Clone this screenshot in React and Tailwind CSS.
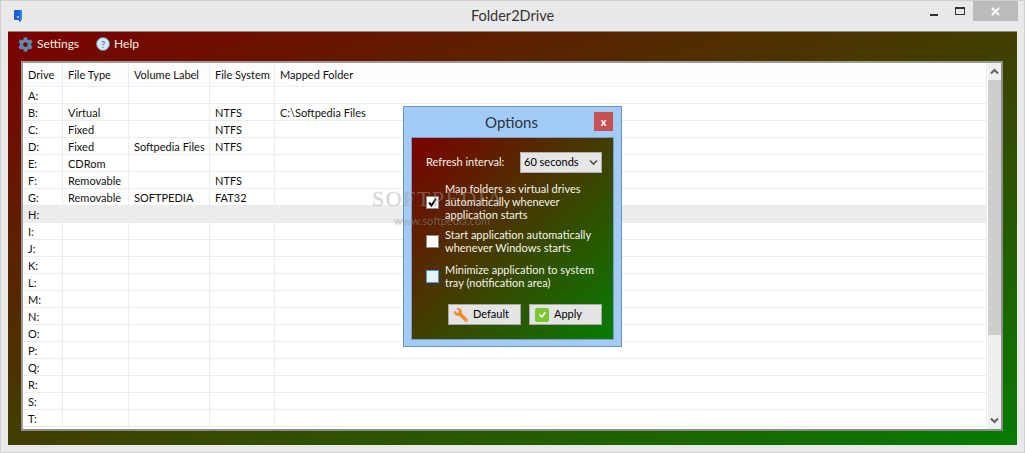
import React from 'react'
import { FaCog, FaWrench } from 'react-icons/fa'

const drives = [
  ['A:', '', '', '', ''],
  ['B:', 'Virtual', '', 'NTFS', 'C:\\Softpedia Files'],
  ['C:', 'Fixed', '', 'NTFS', ''],
  ['D:', 'Fixed', 'Softpedia Files', 'NTFS', ''],
  ['E:', 'CDRom', '', '', ''],
  ['F:', 'Removable', '', 'NTFS', ''],
  ['G:', 'Removable', 'SOFTPEDIA', 'FAT32', ''],
  ['H:', '', '', '', ''],
  ['I:', '', '', '', ''],
  ['J:', '', '', '', ''],
  ['K:', '', '', '', ''],
  ['L:', '', '', '', ''],
  ['M:', '', '', '', ''],
  ['N:', '', '', '', ''],
  ['O:', '', '', '', ''],
  ['P:', '', '', '', ''],
  ['Q:', '', '', '', ''],
  ['R:', '', '', '', ''],
  ['S:', '', '', '', ''],
  ['T:', '', '', '', ''],
]

const headers = ['Drive', 'File Type', 'Volume Label', 'File System', 'Mapped Folder']
const colWidths = ['w-[40px]', 'w-[66px]', 'w-[81px]', 'w-[65px]', 'flex-1']

const ScrollArrow = ({ up }) => (
  <svg width="9" height="7" viewBox="0 0 9 7" className="shrink-0">
    <path d={up ? 'M1 5.5 L4.5 2 L8 5.5' : 'M1 1.5 L4.5 5 L8 1.5'} fill="none" stroke="#606060" strokeWidth="2" />
  </svg>
)

const Check = ({ checked, hover, label, className, labelClass = '' }) => (
  <div className={`flex items-center gap-[6px] pl-[14px] ${className}`}>
    <div
      className={`w-[13px] h-[13px] shrink-0 border flex items-center justify-center ${
        hover ? 'bg-[#e8f3ff] border-[#3e9bf0]' : 'bg-white border-[#8a8a8a]'
      }`}
    >
      {checked && (
        <svg width="11" height="11" viewBox="0 0 11 11">
          <path d="M2 5.5 L4.5 8.5 L9 1.5" fill="none" stroke="#111" strokeWidth="2" />
        </svg>
      )}
    </div>
    <div className={`text-[#f4f4ec] text-[11px] leading-[13px] w-[162px] ${labelClass}`}>{label}</div>
  </div>
)

const OptionButton = ({ icon, label }) => (
  <div className="w-[73px] h-[21px] bg-[#e4e4e4] border border-[#a8a8a8] flex items-center gap-[5px] pl-[5px] text-[11px] text-black">
    {icon}
    <span>{label}</span>
  </div>
)

export default function App() {
  return (
    <div
      className="relative w-[1025px] h-[453px] overflow-hidden bg-[#e9e9e9] border border-[#d0d0d0] flex flex-col"
      style={{ fontFamily: 'Lato, Roboto, sans-serif' }}
    >
      {/* title bar */}
      <div className="relative h-[30px] shrink-0 flex items-center justify-center">
        <svg width="9" height="12" viewBox="0 0 9 12" className="absolute left-[13px] top-[9px]">
          <rect x="0" y="0" width="8" height="10" rx="1" fill="#1c5fd0" />
          <rect x="6" y="0" width="2" height="10" fill="#2f86ee" />
          <rect x="3" y="6" width="2" height="2" fill="#9cc4f5" />
          <rect x="5" y="10" width="2" height="1.5" fill="#1c5fd0" />
        </svg>
        <div className="text-[14.5px] text-[#333] pb-[1px]">Folder2Drive</div>
        <div className="absolute right-[6px] top-0 flex items-start">
          <div className="w-[27px] h-[20px] flex items-end justify-center pb-[5px]">
            <div className="w-[8px] h-[2px] bg-[#333]" />
          </div>
          <div className="w-[26px] h-[20px] flex items-start justify-center pt-[6px]">
            <div className="w-[10px] h-[8px] border border-t-2 border-[#333]" />
          </div>
          <div className="w-[45px] h-[20px] bg-[#bcbcbc] flex items-center justify-center">
            <svg width="9" height="9" viewBox="0 0 9 9">
              <path d="M1 1 L8 8 M8 1 L1 8" stroke="#fff" strokeWidth="2" />
            </svg>
          </div>
        </div>
      </div>

      {/* gradient panel */}
      <div className="mx-[7px] w-[1009px] h-[414px] flex flex-col bg-linear-to-br/srgb from-[#7c0000] to-[#067c00] border-t border-[#8a8a7a]">
        <div className="h-[29px] shrink-0 flex items-center pl-[10px] pb-[5px] text-[12px] text-[#f4f0e4]">
          <FaCog className="w-[15px] h-[15px] text-[#5f88ad] mr-[4px]" />
          <span>Settings</span>
          <div className="ml-[17px] mr-[4px] w-[14px] h-[14px] rounded-full bg-[#d8e8f6] border border-[#5f88ad] flex items-center justify-center text-[10px] font-bold text-[#5f88ad]">
            ?
          </div>
          <span>Help</span>
        </div>

        <div className="mx-[13px] w-[982px] h-[370px] bg-white border-2 border-[#8c8c8c] border-t-[#9a9a9a] border-l-[#9a9a9a] flex">
          <div className="w-[964px] shrink-0 overflow-hidden">
            <div className="flex h-[24px] border-b border-[#e4edf8] text-[11px] text-[#111]">
              {headers.map((h, i) => (
                <div
                  key={h}
                  className={`${colWidths[i]} flex items-center pl-[5px] pt-[1px] border-r border-[#e4edf8] bg-[#fdfdfd] whitespace-nowrap`}
                >
                  {h}
                </div>
              ))}
            </div>
            {drives.map((row) => (
              <div
                key={row[0]}
                className={`flex h-[17px] border-b border-[#ececec] text-[11px] leading-[16px] text-[#111] ${
                  row[0] === 'H:' ? 'bg-[#ececec]' : ''
                }`}
              >
                {row.map((cell, i) => (
                  <div key={i} className={`${colWidths[i]} pl-[5px] pt-[1px] border-r border-[#ececec] whitespace-nowrap`}>
                    {cell}
                  </div>
                ))}
              </div>
            ))}
          </div>
          <div className="w-[15px] ml-[1px] bg-[#efefef] flex flex-col items-center">
            <div className="h-[17px] flex items-center justify-center">
              <ScrollArrow up />
            </div>
            <div className="w-full h-[255px] bg-[#cdcdcd]" />
            <div className="flex-1" />
            <div className="h-[17px] flex items-center justify-center">
              <ScrollArrow />
            </div>
          </div>
        </div>
      </div>

      {/* options dialog */}
      <div className="absolute left-[402px] top-[105px] w-[219px] h-[241px] bg-[#a3cbf7] border border-[#6f93b8] flex flex-col">
        <div className="relative h-[30px] shrink-0 flex items-center justify-center text-[15px] text-[#2a3440]">
          <span className="pr-[2px]">Options</span>
          <div className="absolute right-[8px] top-[5px] w-[19px] h-[19px] bg-[#c75050] flex items-center justify-center text-white text-[11px] font-bold leading-none">
            x
          </div>
        </div>
        <div className="mx-[7px] w-[203px] h-[203px] border border-[#7d9cc0] bg-linear-to-br/srgb from-[#7c0000] to-[#067c00] flex flex-col">
          <div className="flex items-center pl-[14px] pt-[14px] text-[11px] text-[#f4f4ec]">
            <span className="w-[94px]">Refresh interval:</span>
            <div className="w-[82px] h-[21px] bg-[#e6e6e6] border border-[#b0b0b0] flex items-center justify-between px-[3px] text-[11px] text-black">
              60 seconds
              <svg width="9" height="7" viewBox="0 0 9 7">
                <path d="M1 1.5 L4.5 5 L8 1.5" fill="none" stroke="#505050" strokeWidth="1.6" />
              </svg>
            </div>
          </div>
          <Check className="mt-[9px]" labelClass="pb-[2px]" checked label="Map folders as virtual drives automatically whenever application starts" />
          <Check className="mt-[5px]" label="Start application automatically whenever Windows starts" />
          <Check className="mt-[9px]" hover label="Minimize application to system tray (notification area)" />
          <div className="flex gap-[8px] pl-[36px] mt-[15px]">
            <OptionButton icon={<FaWrench className="w-[14px] h-[14px] text-[#ee8a2c] -scale-x-100" />} label="Default" />
            <OptionButton
              icon={
                <div className="w-[14px] h-[14px] rounded-[2px] bg-[#79c832] flex items-center justify-center">
                  <svg width="9" height="9" viewBox="0 0 9 9">
                    <path d="M1.5 4.5 L3.8 7 L7.5 2" fill="none" stroke="#fff" strokeWidth="1.6" />
                  </svg>
                </div>
              }
              label="Apply"
            />
          </div>
        </div>
      </div>

      {/* watermark over everything */}
      <div className="absolute left-[371px] top-[181px] text-[22px] tracking-[1.5px] text-white/30 [text-shadow:0_0_1px_rgba(0,0,0,0.25)] font-['Liberation_Serif',serif] pointer-events-none">
        SOFTPEDIA
      </div>
      <div className="absolute left-[393px] top-[212px] text-[11px] text-white/30 [text-shadow:0_0_1px_rgba(0,0,0,0.3)] pointer-events-none">
        www.softpedia.com
      </div>
    </div>
  )
}
